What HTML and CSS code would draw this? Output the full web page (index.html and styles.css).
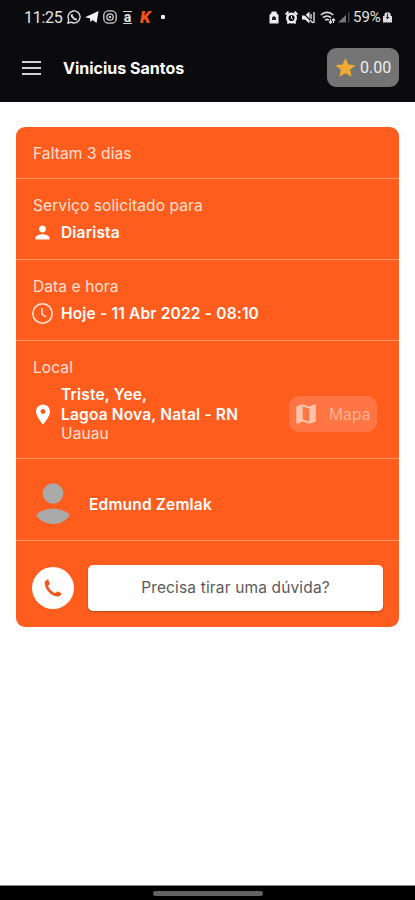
FILE: index.html
```html
<!DOCTYPE html>
<html lang="pt-BR">
<head>
  <meta charset="UTF-8" />
  <meta name="viewport" content="width=device-width, initial-scale=1.0"/>
  <title>Vinicius Santos</title>
  <link rel="stylesheet" href="styles.css">
</head>
<body>
  <header class="header">
    <div class="status-bar">
      <div class="status-left">
        <span class="clock">11:25</span>
        <svg width="14" height="14" viewBox="0 0 14 14" fill="none" stroke="#ddd" stroke-width="1.4"><path d="M1 13l.8-3.200A6 6 0 1 1 4.200 12.200z"/><path d="M4.600 4.200c0 2.800 2.400 5.200 5.200 5.200" stroke-width="2"/></svg>
        <svg width="14" height="14" viewBox="0 0 14 14" fill="#f2f2f2"><path d="M0 7.200L13.600 1l-2 12-4-3-2.100 2-.7-3.800z"/></svg>
        <svg width="14" height="14" viewBox="0 0 14 14" fill="none" stroke="#ccc" stroke-width="1.300"><rect x=".8" y=".8" width="12.400" height="12.400" rx="4.500"/><circle cx="7" cy="7" r="3.200"/><circle cx="7" cy="7" r=".6"/></svg>
        <span class="app-a">a</span>
        <span class="app-k">K</span>
        <span class="dot"></span>
      </div>
      <div class="status-right">
        <svg width="10" height="13" viewBox="0 0 10 13"><path d="M2.500 2V.5h5V2L9.500 4v8.500h-9V4z" fill="#eee"/><path d="M3 9V6.500L5 5l2 1.500V9z" fill="#222"/></svg>
        <svg class="alarm" width="13" height="13" viewBox="0 0 13 13" fill="none" stroke="#eee"><circle cx="6.500" cy="7" r="4.300" stroke-width="2.400"/><path d="M.7 3.500L3.500.8M12.300 3.500L9.500.8M2.500 12.500l1.500-2M10.500 12.500L9 10.500" stroke-width="2"/><path d="M6.500 4.800v2.500l1.500.8"/></svg>
        <svg class="mute" width="13" height="13" viewBox="0 0 13 13"><path d="M0 4.500h3L7.500.5v12L3 8.500H0z" fill="#eee"/><path d="M0 1l11 11" stroke="#0b0a0c" stroke-width="1.200"/><path d="M9 3v5M12 1v11M8 9l3 3" stroke="#ddd" stroke-width="1.400"/></svg>
        <svg class="wifi" width="16" height="13" viewBox="0 0 16 13" fill="none" stroke="#ddd" stroke-width="1.700"><path d="M.8 4c3.500-3.400 9-3.400 12.400 0M3 6.700c2.300-2.200 5.700-2.200 8 0M5.200 9.200c1.200-1 2.400-1 3.600 0"/><path d="M10.500 8v4M9 10.500l1.500 1.800L12 10.500M13.500 12V8M12 9.500l1.500-1.700L15 9.500" stroke-width="1.200"/></svg>
        <svg class="signal" width="12" height="12" viewBox="0 0 12 12"><path d="M0 11.500L8 4v7.500z" fill="#777"/><path d="M10.800 1v10.500" stroke="#555" stroke-width="1.200"/></svg>
        <span class="battery">59%</span>
        <svg width="11" height="12" viewBox="0 0 10 12"><path d="M.5 5h1.500V3.500C2 .5 8 .2 8.200 3.500V5h1.300v6.500h-9z" fill="#ddd"/><path d="M5 2.500v5M3.500 6L5 7.800 6.500 6" stroke="#222" fill="none"/></svg>
      </div>
    </div>
    <div class="app-bar">
      <svg class="menu" width="19" height="16" viewBox="0 0 19 16" stroke="#d2d2d2" stroke-width="2"><path d="M0 2h19M0 8h19M0 14h19"/></svg>
      <h1>Vinicius Santos</h1>
      <div class="rating">
        <svg width="21" height="21" viewBox="0 0 24 24" fill="#f0aa33"><path d="M12 1l3.300 7.500 8.200.8-6.200 5.400 1.800 8L12 18.500 4.900 22.700l1.800-8L.5 9.300l8.200-.8z"/></svg>
        <span>0.00</span>
      </div>
    </div>
  </header>

  <main class="card">
    <section class="row row-days">
      <p class="light">Faltam 3 dias</p>
    </section>

    <section class="row row-info">
      <p class="light label">Serviço solicitado para</p>
      <div class="line">
        <svg class="icon" width="21" height="21" viewBox="0 0 24 24" fill="#fff"><path d="M12 12c2.210 0 4-1.790 4-4s-1.790-4-4-4-4 1.790-4 4 1.790 4 4 4zm0 2c-2.670 0-8 1.340-8 4v2h16v-2c0-2.660-5.330-4-8-4z"/></svg>
        <strong class="job">Diarista</strong>
      </div>
    </section>

    <section class="row row-info">
      <p class="light label">Data e hora</p>
      <div class="line">
        <svg class="icon" width="21" height="21" viewBox="0 0 21 21" fill="none" stroke="#ffe5da" stroke-width="1.500"><circle cx="10.500" cy="10.500" r="9.700"/><path d="M10 5v6l4 3"/></svg>
        <strong class="date">Hoje - 11 Abr 2022 - 08:10</strong>
      </div>
    </section>

    <section class="row row-place">
      <p class="light label">Local</p>
      <div class="place">
        <svg class="icon" width="22" height="25" viewBox="1 1 22 22" fill="#fff"><path fill-rule="evenodd" d="M12 2C8.130 2 5 5.130 5 9c0 5.250 7 13 7 13s7-7.750 7-13c0-3.870-3.130-7-7-7zm0 9.500a2.500 2.500 0 0 1 0-5 2.500 2.500 0 0 1 0 5z"/></svg>
        <address>
          <strong class="street">Triste, Yee,</strong>
          <strong class="city">Lagoa Nova, Natal - RN</strong>
          <span class="light">Uauau</span>
        </address>
        <div class="map-button">
          <svg width="26" height="26" viewBox="0 0 24 24" fill="#ffc3a9"><path d="M20.500 3l-.16.030L15 5.100 9 3 3.360 4.900c-.21.070-.36.250-.36.480V20.500c0 .28.220.5.500.5l.16-.030L9 18.900l6 2.100 5.640-1.900c.21-.070.36-.250.360-.480V3.500c0-.28-.22-.5-.5-.5zM15 19l-6-2.110V5l6 2.110V19z"/></svg>
          <span>Mapa</span>
        </div>
      </div>
    </section>

    <section class="row row-person">
      <svg class="avatar" width="36" height="42" viewBox="0 0 36 42" fill="#aaa"><circle cx="18" cy="10.500" r="10.300"/><path d="M1 32c8-8.500 26-8.500 34 0-8 12-26 12-34 0z"/></svg>
      <strong class="person">Edmund Zemlak</strong>
    </section>

    <section class="row row-help">
      <div class="phone">
        <svg width="20" height="20" viewBox="0 0 20 20" fill="#f2561d"><path d="M4.500 1.500C2.800 2.300 1.500 3.600 1.700 5.500 2.700 12.500 8 17.800 14.500 18.600c2 .1 3.200-1.100 3.900-2.800.1-.4-.1-.7-.4-.9l-3.400-1.300c-.4-.1-.7 0-1 .3l-1.200 1.400C8.900 14 6.300 11.400 5 7.800l1.500-1.200c.3-.3.4-.6.200-1L5.300 1.900c-.2-.4-.5-.5-.8-.4z"/></svg>
      </div>
      <div class="help-button"><span>Precisa tirar uma dúvida?</span></div>
    </section>
  </main>

  <footer class="nav-bar">
    <div class="handle"></div>
  </footer>
</body>
</html>
```

FILE: styles.css
```css
:root {
  --orange: #ff5d1e;
  --line: #ff9468;
  --black: #0b0a0c;
}

* {
  box-sizing: border-box;
}

body {
  margin: 0;
  height: 900px;
  display: flex;
  flex-direction: column;
  background: #fefefe;
  font-family: Inter, "Liberation Sans", sans-serif;
  font-size: 15.5px;
  letter-spacing: 0.1px;
  color: #fff;
  white-space: nowrap;
  overflow: hidden;
}

h1, p {
  margin: 0;
}

strong {
  font-weight: 600;
  letter-spacing: 0.18px;
}

svg {
  display: block;
  flex: none;
}

.header {
  height: 102px;
  background: var(--black);
}

.status-bar {
  height: 34px;
  padding: 0 22px 0 24px;
  display: flex;
  align-items: center;
  justify-content: space-between;
  font-family: Roboto, sans-serif;
  letter-spacing: 0;
  color: #e2e2e2;
}

.status-left {
  display: flex;
  align-items: center;
  gap: 4px;
}

.clock {
  width: 39px;
  font-size: 16px;
  letter-spacing: -0.3px;
}

.app-a {
  width: 9px;
  margin: 0 4px 0 2px;
  border-top: 1px solid #ccc;
  border-bottom: 1px solid #ccc;
  font-size: 14px;
  font-weight: 700;
  line-height: 11px;
  text-align: center;
}

.app-k {
  width: 12px;
  font-size: 17px;
  font-weight: 900;
  font-style: italic;
  color: #f4521b;
}

.dot {
  width: 4px;
  height: 4px;
  margin-left: 5px;
  border-radius: 1px;
  background: #eee;
}

.status-right {
  display: flex;
  align-items: center;
}

.alarm {
  margin-left: 6px;
}

.mute {
  margin-left: 4px;
}

.wifi {
  margin-left: 5px;
}

.signal {
  margin-left: 2px;
}

.battery {
  width: 29px;
  margin-left: 3px;
  font-size: 15px;
}

.app-bar {
  height: 67px;
  padding: 0 16px 0 22px;
  display: flex;
  align-items: center;
}

.app-bar h1 {
  margin-left: 22px;
  font-size: 16px;
  font-weight: 700;
  letter-spacing: 0;
}

.rating {
  width: 72px;
  height: 39px;
  margin-left: auto;
  padding-left: 8px;
  display: flex;
  align-items: center;
  gap: 4px;
  border-radius: 9px;
  background: #747474;
  font-family: Roboto, sans-serif;
  font-size: 16px;
  letter-spacing: 0;
  color: #eee;
}

.card {
  width: 383px;
  height: 500px;
  margin: 25px 0 0 16px;
  border-radius: 9px;
  background: var(--orange);
}

.row {
  padding-left: 16px;
  border-bottom: 1px solid var(--line);
}

.light {
  color: #ffe0d2;
}

.row-days {
  height: 52px;
  line-height: 53px;
}

.row-info {
  height: 81px;
  padding-top: 17px;
}

.label {
  padding-left: 1px;
  line-height: 20px;
}

.row-days .light {
  padding-left: 1px;
}

.line {
  height: 33px;
  display: flex;
  align-items: center;
  gap: 8px;
}

.row-place {
  height: 118px;
  padding-top: 17px;
}

.place {
  display: flex;
  align-items: center;
  gap: 7px;
  padding-top: 7px;
}

address {
  width: 226px;
  font-style: normal;
  line-height: 19.5px;
}

address strong,
address span {
  display: block;
}

.map-button {
  width: 88px;
  height: 36px;
  margin-left: -5px;
  padding-left: 4px;
  display: flex;
  align-items: center;
  gap: 10px;
  border-radius: 10px;
  background: #ff7543;
  color: #ffb092;
}

.row-person {
  height: 82px;
  padding: 9px 0 0 19px;
  display: flex;
  align-items: center;
  gap: 18px;
}

.row-help {
  height: 85px;
  padding-top: 8px;
  border: 0;
  display: flex;
  align-items: center;
  gap: 14px;
}

.phone {
  width: 42px;
  height: 42px;
  display: flex;
  align-items: center;
  justify-content: center;
  border-radius: 50%;
  background: #fff;
}

.help-button {
  width: 295px;
  height: 46px;
  display: flex;
  align-items: center;
  justify-content: center;
  border-radius: 5px;
  background: #fff;
  box-shadow: 0 1px 2px #a8481f;
  letter-spacing: 0.15px;
  color: #5a5a5a;
}

.nav-bar {
  height: 15px;
  margin-top: auto;
  padding-top: 5px;
  border-top: 1px solid #888;
  background: #000;
}

.handle {
  width: 110px;
  height: 5px;
  margin: 0 auto;
  border-radius: 3px;
  background: #626262;
}
```
